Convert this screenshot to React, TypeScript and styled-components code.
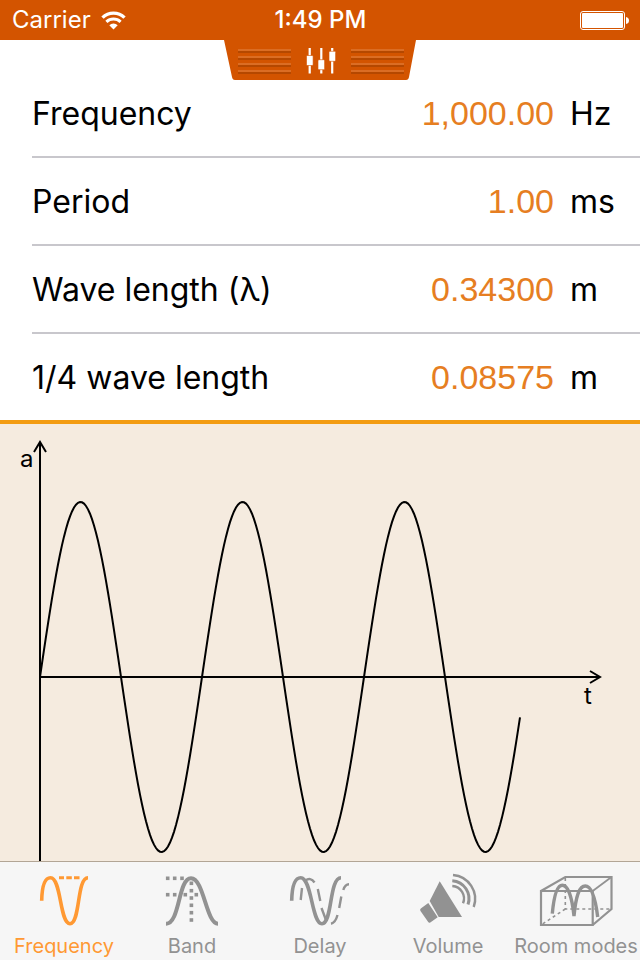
import React, { useState } from "react";
import styled, { createGlobalStyle } from "styled-components";

const GlobalStyle = createGlobalStyle`
  *, *::before, *::after { box-sizing: border-box; }
  body { margin: 0; background: #f5ebdf; }
  button, input { font: inherit; border: 0; padding: 0; background: none; }
`;

const Screen = styled.div`
  display: flex;
  flex-direction: column;
  min-height: 100vh;
  color: #000;
  font-family: Inter, "Noto Sans", sans-serif;
`;

const StatusBar = styled.header`
  position: relative;
  display: grid;
  grid-template-columns: 1fr auto 1fr;
  align-items: center;
  height: 40px;
  padding: 0 11px 0 12px;
  background: #d35400;
  color: #fff;
  font-size: 24px;
  line-height: 40px;
`;

const Carrier = styled.div`
  display: flex;
  align-items: center;
  gap: 10px;
`;

const Clock = styled.time`
  font-weight: 500;
`;

const BatteryIcon = styled.svg`
  justify-self: end;
`;

const DrawerHandle = styled.button`
  position: absolute;
  top: 100%;
  left: 50%;
  width: 192px;
  height: 40px;
  margin-left: -96px;
  cursor: pointer;

  svg { display: block; }
`;

const Readouts = styled.form`
  padding-top: 30px;
  background: #fff;
  border-bottom: 4px solid #f39c12;
`;

const ReadoutRow = styled.div`
  display: flex;
  align-items: center;
  gap: 16px;
  height: 88px;
  margin-left: 32px;
  border-bottom: 2px solid #c8c7cc;
  font-size: 32px;
  line-height: 40px;

  &:last-child { height: 86px; border-bottom: 0; }
`;

const ReadoutLabel = styled.label`
  flex: none;
  padding-top: 2px;
`;

const ReadoutInput = styled.input`
  flex: 1;
  min-width: 0;
  color: #e67e22;
  font-family: "Liberation Sans", Arial, sans-serif;
  font-size: 34px;
  text-align: right;
  outline: none;
`;

const Unit = styled.span`
  width: 70px;
  padding-top: 2px;
`;

const Graph = styled.main`
  flex: 1;
  background: #f5ebdf;

  svg { display: block; width: 100%; height: auto; }
  text { font-size: 24px; }
`;

const TabBar = styled.nav`
  display: grid;
  grid-template-columns: repeat(5, 1fr);
  height: 99px;
  padding-top: 8px;
  background: #f6f6f6;
  border-top: 1px solid #b2a595;
`;

const Tab = styled.button<{ $active: boolean }>`
  display: flex;
  flex-direction: column;
  align-items: center;
  gap: 4px;
  color: ${(p) => (p.$active ? "#ff9933" : "#929292")};
  font-size: 20px;
  line-height: 24px;
  white-space: nowrap;
  cursor: pointer;
`;

const FrequencyIcon = () => (
  <g fill="none" stroke="currentColor">
    <path strokeWidth="3.6" d="M17.7 30.7C18 16 20.500 7.700 26.500 7.700C37.500 7.700 35.500 53.700 46 53.700C56.500 53.700 52.500 7.700 64 7.700" />
    <path strokeWidth="3" d="M35 7.700h5M42.300 7.700h5.500M50 7.700h5.500" />
  </g>
);

const bandDots: [number, number][] = [
  [15.7, 8.3], [22.7, 8.3], [30, 8.3],
  [15.7, 24.7], [22.7, 24.7], [33.3, 24.7], [44.3, 24.7],
  [39.4, 13.3], [39.4, 20.7], [39.4, 28], [39.4, 35.3], [39.4, 42.7], [39.4, 50],
];

const BandIcon = () => (
  <g fill="currentColor">
    <path fill="none" stroke="currentColor" strokeWidth="4" d="M14 53.700C28 54 26 8.300 39 8.300C52 8.300 54 53.700 66 53.700" />
    {bandDots.map(([x, y]) => (
      <rect key={`${x}-${y}`} x={x - 1.8} y={y - 1.8} width="3.6" height="3.6" />
    ))}
  </g>
);

const DelayIcon = () => (
  <g fill="none" stroke="currentColor">
    <path strokeWidth="3.6" d="M11.700 30.700C12 16 14.500 7.700 20.700 7.700C32 7.700 31.500 53.700 42 53.700C52.500 53.700 49 7.700 61 7.700" />
    <path strokeWidth="2.4" d="M20.700 30L22 18M25.500 10.500C28.500 8.200 32 8.500 34.500 12.500M37.800 19L40.300 31M41.500 38L46 50M51 53.700C54.500 53 56.300 49.500 57.500 45M59.200 38L61.300 26.500M63.300 20C64.500 16 66 14.200 69 14.200" />
  </g>
);

const VolumeIcon = () => (
  <g fill="currentColor">
    <path d="M31.700 11.300L54 47H30.700L21.700 31Z" />
    <path d="M20.300 33L29.700 47.300L22.300 52.500Q21 53.300 20.200 52L12.500 41Q11.500 39.500 12.800 38.500Z" />
    <g fill="none" stroke="currentColor">
      <path strokeWidth="2.4" d="M45 5A24 24 0 0 1 65.700 37" />
      <path strokeWidth="3" d="M44.300 10.700A18 18 0 0 1 60 34.500" />
      <path strokeWidth="2.4" d="M44.300 16A12.500 12.500 0 0 1 55 33.300" />
    </g>
  </g>
);

const RoomIcon = () => (
  <g fill="none" stroke="currentColor">
    <path strokeWidth="2.2" d="M5 21H56.700V55H5ZM5 21L29.300 7H75.500V39L56.700 55" />
    <path strokeWidth="1.8" d="M56.700 21L75.500 7" />
    <path strokeWidth="1.6" strokeDasharray="3 3" d="M29.300 8V39H75M29.300 39L5 55" />
    <path strokeWidth="3.400" d="M16.300 43.700C18 25 21.500 15.300 26.300 15.300C32 15.300 36 27 38 46C40 25 43.500 16 49.300 16C56 16 59.500 29 61.700 47" />
  </g>
);

const tabs = [
  { label: "Frequency", Icon: FrequencyIcon },
  { label: "Band", Icon: BandIcon },
  { label: "Delay", Icon: DelayIcon },
  { label: "Volume", Icon: VolumeIcon },
  { label: "Room modes", Icon: RoomIcon },
];

const readouts = [
  { id: "frequency", label: "Frequency", value: "1,000.00", unit: "Hz" },
  { id: "period", label: "Period", value: "1.00", unit: "ms" },
  { id: "wave-length", label: "Wave length (λ)", value: "0.34300", unit: "m" },
  { id: "quarter-wave", label: "1/4 wave length", value: "0.08575", unit: "m" },
];

// Sine curve sampled every 2 units along the time axis.
const origin = { x: 40, y: 253 };
const wave = Array.from({ length: 241 }, (_, i) => {
  const x = i * 2;
  const y = origin.y - 175 * Math.sin((x / 162) * 2 * Math.PI);
  return `${origin.x + x},${y.toFixed(2)}`;
}).join(" ");

export default function App() {
  const [active, setActive] = useState("Frequency");
  const [values, setValues] = useState<Record<string, string>>(
    Object.fromEntries(readouts.map((r) => [r.id, r.value]))
  );

  return (
    <Screen>
      <GlobalStyle />
      <StatusBar>
        <Carrier>
          Carrier
          <svg width="25" height="19" viewBox="0 0 25 19" fill="none" stroke="#fff" aria-hidden="true">
            <path strokeWidth="3.4" d="M1.500 6.600A15.800 15.800 0 0 1 23.500 6.600" />
            <path strokeWidth="3" d="M5.400 10.900A10.200 10.200 0 0 1 19.600 10.900" />
            <path fill="#fff" stroke="none" d="M12.500 18.500L8.300 14.300A6 6 0 0 1 16.700 14.300Z" />
          </svg>
        </Carrier>
        <Clock>1:49 PM</Clock>
        <BatteryIcon width="49" height="20" viewBox="0 0 49 20" aria-hidden="true">
          <rect x="0.500" y="1.500" width="44" height="18" rx="2.500" fill="none" stroke="#fff" />
          <rect x="2" y="3" width="41" height="15" rx="1" fill="#fff" />
          <path d="M46 7Q49 7.500 49 10.500Q49 13.500 46 14Z" fill="#fff" />
        </BatteryIcon>
        <DrawerHandle type="button" aria-label="Open settings">
          <svg width="192" height="40" viewBox="0 0 192 40">
            <path d="M0 0H192L185 37Q184.500 40 182 40H11Q8.500 40 8 37Z" fill="#d35400" />
            {[9, 16, 23, 30].map((y) => (
              <g key={y}>
                <path d={`M14 ${y + 1}h53M127 ${y + 1}h53`} stroke="#db6d24" strokeWidth="2" />
                <path d={`M14 ${y + 3}h53M127 ${y + 3}h53`} stroke="#b54800" strokeWidth="2" />
              </g>
            ))}
            <path d="M85.700 8V33.500M97.300 8V33.500M108.200 8V33.500" stroke="#fff" strokeWidth="2.200" />
            <g fill="#fff" stroke="#d35400" strokeWidth="0.600">
              <rect x="82.500" y="15.500" width="6.600" height="10" rx="1" />
              <rect x="94" y="19.700" width="6.600" height="10" rx="1" />
              <rect x="105" y="11.300" width="6.600" height="10" rx="1" />
            </g>
          </svg>
        </DrawerHandle>
      </StatusBar>

      <Readouts onSubmit={(e) => e.preventDefault()}>
        {readouts.map((r) => (
          <ReadoutRow key={r.id}>
            <ReadoutLabel htmlFor={r.id}>{r.label}</ReadoutLabel>
            <ReadoutInput
              id={r.id}
              inputMode="decimal"
              value={values[r.id]}
              onChange={(e) => setValues({ ...values, [r.id]: e.target.value })}
            />
            <Unit>{r.unit}</Unit>
          </ReadoutRow>
        ))}
      </Readouts>

      <Graph>
        <svg viewBox="0 0 640 437" role="img" aria-label="Amplitude over time">
          <g fill="none" stroke="#000" strokeWidth="2">
            <path d="M40 437V18M34 28L40 18L46 28" />
            <path d="M40 253H600M590 247L600 253L590 259" />
            <polyline points={wave} />
          </g>
          <text x="20" y="43">a</text>
          <text x="584" y="280">t</text>
        </svg>
      </Graph>

      <TabBar>
        {tabs.map(({ label, Icon }) => (
          <Tab
            key={label}
            type="button"
            $active={label === active}
            aria-current={label === active ? "page" : undefined}
            onClick={() => setActive(label)}
          >
            <svg width="80" height="60" viewBox="0 0 80 60" aria-hidden="true">
              <Icon />
            </svg>
            {label}
          </Tab>
        ))}
      </TabBar>
    </Screen>
  );
}
